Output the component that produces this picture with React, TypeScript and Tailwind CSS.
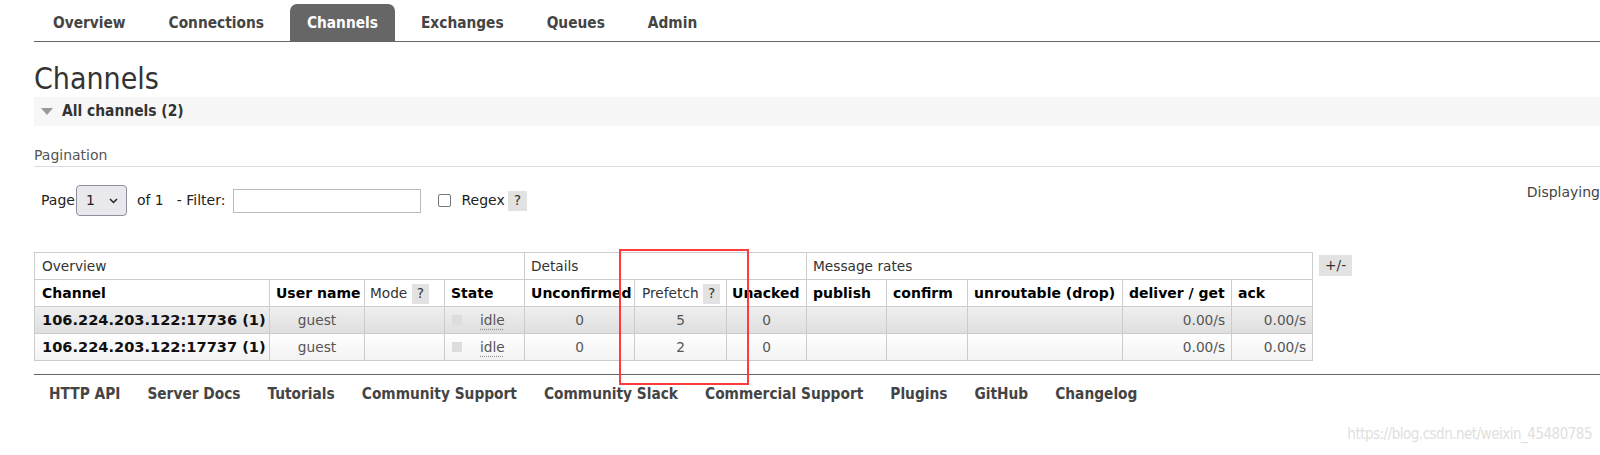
const navItems = ['Overview', 'Connections', 'Channels', 'Exchanges', 'Queues', 'Admin']
const footerLinks = [
  'HTTP API',
  'Server Docs',
  'Tutorials',
  'Community Support',
  'Community Slack',
  'Commercial Support',
  'Plugins',
  'GitHub',
  'Changelog',
]

type ChannelRow = {
  name: string
  user: string
  state: string
  unconfirmed: number
  prefetch: number
  unacked: number
  deliver: string
  ack: string
}

const rows: ChannelRow[] = [
  { name: '106.224.203.122:17736 (1)', user: 'guest', state: 'idle', unconfirmed: 0, prefetch: 5, unacked: 0, deliver: '0.00/s', ack: '0.00/s' },
  { name: '106.224.203.122:17737 (1)', user: 'guest', state: 'idle', unconfirmed: 0, prefetch: 2, unacked: 0, deliver: '0.00/s', ack: '0.00/s' },
]

const colWidths = [235, 95, 80, 80, 110, 92, 80, 80, 81, 155, 109, 81]

function Help({ wide = false }: { wide?: boolean }) {
  return (
    <span
      className={`inline-flex h-[20px] items-center bg-[#e2e2e2] align-middle text-[#333] ${
        wide ? 'px-[6px]' : 'px-[5px]'
      }`}
    >
      ?
    </span>
  )
}

export default function App() {
  return (
    <div className="relative h-[455px] w-[1600px] overflow-hidden bg-white pl-[34px] font-['DejaVu_Sans',sans-serif] text-[14px] text-[#333]">
      {/* top nav */}
      <nav className="flex items-end gap-[9px] border-b border-[#666] pl-[2px] pt-[4px] font-['DejaVu_Sans_Condensed',sans-serif] text-[15.3px] font-bold">
        {navItems.map((item) =>
          item === 'Channels' ? (
            <span key={item} className="flex h-[37px] items-center rounded-t-[7px] bg-[#666] px-[17px] pt-[2px] text-white">
              {item}
            </span>
          ) : (
            <span key={item} className="flex h-[37px] items-center px-[17px] pt-[2px] text-[#444]">
              {item}
            </span>
          )
        )}
      </nav>

      <h1 className="mt-[19px] font-['DejaVu_Sans_Condensed',sans-serif] text-[30px] leading-[36px] text-[#333]">
        Channels
      </h1>

      <div className="flex h-[29px] items-center bg-[#f7f7f7] pl-[7px] font-['DejaVu_Sans_Condensed',sans-serif] text-[15.4px] font-bold text-[#333]">
        <svg width="12" height="8" viewBox="0 0 12 8" className="mr-[9px]">
          <path d="M0 0 L12 0 L6 7 Z" fill="#999" />
        </svg>
        All channels (2)
      </div>

      {/* pagination */}
      <div className="mt-[21px] border-b border-[#ddd] pb-[2px] leading-[17px] text-[#555]">Pagination</div>

      <div className="mt-[18px] flex h-[31px] items-center text-[#222]">
        <span className="ml-[7px]">Page</span>
        <div className="ml-[1px] flex h-[31px] w-[51px] items-center justify-between rounded-[4px] border border-[#8f8f9d] bg-[#e9e9ed] pl-[9px] pr-[8px]">
          <span>1</span>
          <svg width="9" height="6" viewBox="0 0 9 6">
            <path d="M1 1 L4.5 4.5 L8 1" fill="none" stroke="#222" strokeWidth="1.5" />
          </svg>
        </div>
        <span className="ml-[10px]">of 1</span>
        <span className="ml-[13px]">- Filter:</span>
        <div className="ml-[8px] h-[24px] w-[188px] border border-[#bbb] bg-white" />
        <div className="ml-[17px] h-[13px] w-[13px] rounded-[2px] border border-[#767676] bg-white" />
        <span className="ml-[10px]">Regex</span>
        <span className="ml-[3px] flex">
          <Help wide />
        </span>
        <div className="mb-[16px] ml-auto whitespace-nowrap text-[#444]">Displaying</div>
      </div>

      {/* channels table */}
      <div className="mt-[36px] flex items-start gap-[6px]">
        <table className="w-[1278px] table-fixed border-collapse text-[13.7px]">
          <colgroup>
            {colWidths.map((w, i) => (
              <col key={i} style={{ width: w }} />
            ))}
          </colgroup>
          <thead>
            <tr className="h-[27px]">
              <th colSpan={4} className="border border-[#ccc] px-[7px] text-left font-normal text-[#333]">Overview</th>
              <th colSpan={3} className="border border-[#ccc] px-[6px] text-left font-normal text-[#333]">Details</th>
              <th colSpan={5} className="border border-[#ccc] px-[6px] text-left font-normal text-[#333]">Message rates</th>
            </tr>
            <tr className="h-[27px] text-left text-[14px] text-black">
              <th className="border border-[#ccc] px-[7px]">Channel</th>
              <th className="whitespace-nowrap border border-[#ccc] px-[6px]">User name</th>
              <th className="whitespace-nowrap border border-[#ccc] px-[5px] text-[13.7px] font-normal text-[#333]">
                Mode <Help />
              </th>
              <th className="border border-[#ccc] px-[6px]">State</th>
              <th className="whitespace-nowrap border border-[#ccc] px-[6px]">Unconfirmed</th>
              <th className="whitespace-nowrap border border-[#ccc] px-[7px] text-[13.7px] font-normal text-[#333]">
                Prefetch <Help />
              </th>
              <th className="border border-[#ccc] px-[5px]">Unacked</th>
              <th className="border border-[#ccc] px-[6px]">publish</th>
              <th className="border border-[#ccc] px-[6px]">confirm</th>
              <th className="whitespace-nowrap border border-[#ccc] px-[6px]">unroutable (drop)</th>
              <th className="whitespace-nowrap border border-[#ccc] px-[6px]">deliver / get</th>
              <th className="border border-[#ccc] px-[6px]">ack</th>
            </tr>
          </thead>
          <tbody>
            {rows.map((r, i) => {
              const bg = i === 0 ? 'bg-gradient-to-b from-[#efefef] to-[#dedede]' : 'bg-gradient-to-b from-white to-[#f2f2f2]'
              return (
                <tr key={r.name} className={`h-[27px] ${bg} text-[#555]`}>
                  <td className="whitespace-nowrap border border-[#ccc] px-[7px] text-[14.6px] font-bold text-[#111]">{r.name}</td>
                  <td className="border border-[#ccc] text-center">{r.user}</td>
                  <td className="border border-[#ccc]" />
                  <td className="border border-[#ccc] pl-[7px]">
                    <span className="flex items-center">
                      <span className="h-[10px] w-[10px] bg-[#ddd]" />
                      <span className="ml-[18px] underline decoration-dotted decoration-[#999] underline-offset-[4px]">{r.state}</span>
                    </span>
                  </td>
                  <td className="border border-[#ccc] text-center">{r.unconfirmed}</td>
                  <td className="border border-[#ccc] text-center">{r.prefetch}</td>
                  <td className="border border-[#ccc] text-center">{r.unacked}</td>
                  <td className="border border-[#ccc]" />
                  <td className="border border-[#ccc]" />
                  <td className="border border-[#ccc]" />
                  <td className="border border-[#ccc] pr-[6px] text-right">{r.deliver}</td>
                  <td className="border border-[#ccc] pr-[6px] text-right">{r.ack}</td>
                </tr>
              )
            })}
          </tbody>
        </table>
        <span className="mt-[3px] flex h-[21px] items-center bg-[#e2e2e2] px-[6px] text-[13.7px] text-[#333]">+/-</span>
      </div>

      {/* footer */}
      <footer className="mt-[13px] flex gap-[27px] border-t border-[#666] pl-[15px] pt-[8px] font-['DejaVu_Sans_Condensed',sans-serif] text-[15.3px] font-bold text-[#444]">
        {footerLinks.map((l) => (
          <span key={l}>{l}</span>
        ))}
      </footer>

      {/* screenshot watermark */}
      <div className="absolute right-[8px] top-[423px] font-['DejaVu_Sans_Condensed',sans-serif] text-[15px] leading-[22px] tracking-[-0.5px] text-[#e0e0e0]">
        https://blog.csdn.net/weixin_45480785
      </div>

      {/* red highlight box drawn over the prefetch column */}
      <div className="pointer-events-none absolute left-[619px] top-[249px] h-[136px] w-[130px] border-2 border-[#ff3b3b]" />
    </div>
  )
}
